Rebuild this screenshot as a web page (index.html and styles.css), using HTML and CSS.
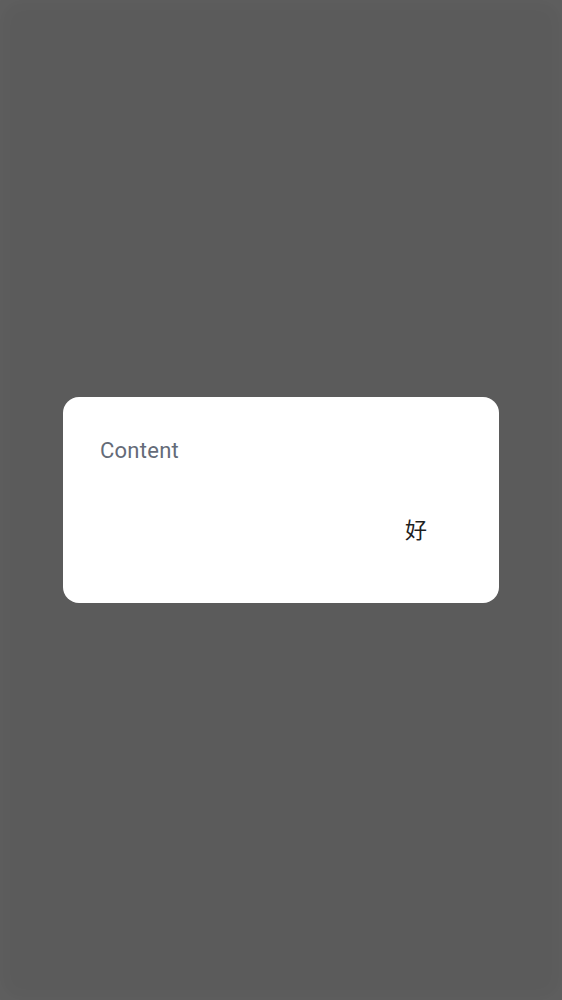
FILE: index.html
```html
<!DOCTYPE html>
<html lang="zh">
<head>
<meta charset="utf-8">
<link rel="stylesheet" href="styles.css">
</head>
<body>
<div class="scrim">
  <div class="dialog">
    <div class="content">Content</div>
    <div class="actions">
      <button class="btn">好</button>
    </div>
  </div>
</div>
</body>
</html>
```
FILE: styles.css
```css
html, body {
  margin: 0;
  padding: 0;
  height: 100%;
}
body {
  background: #5b5b5b;
}
.scrim {
  height: 100%;
  display: flex;
  align-items: center;
  justify-content: center;
  background: #5b5b5b;
  box-shadow: inset 0 0 24px rgba(255, 255, 255, 0.04);
}
.dialog {
  width: 436px;
  height: 206px;
  box-sizing: border-box;
  background: #ffffff;
  border-radius: 16px;
  padding: 40px 37px 0 37px;
  display: flex;
  flex-direction: column;
}
.content {
  font-family: Roboto, "Noto Sans", sans-serif;
  font-size: 22px;
  line-height: 28px;
  letter-spacing: 0.25px;
  color: #646b78;
}
.actions {
  display: flex;
  justify-content: flex-end;
  margin-top: 52px;
  padding-right: 35px;
}
.btn {
  border: none;
  background: none;
  padding: 0;
  margin: 0;
  font-family: "Noto Sans CJK SC", sans-serif;
  font-size: 22px;
  line-height: 22px;
  color: #1f1f1f;
}
```
